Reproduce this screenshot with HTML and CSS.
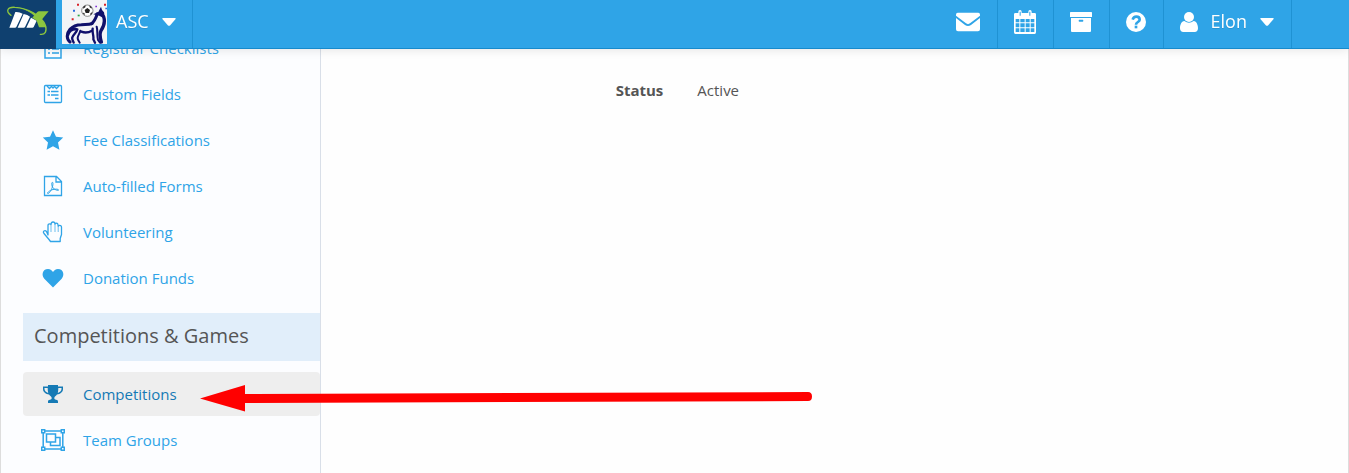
FILE: index.html
```html
<!DOCTYPE html>
<html lang="en">
<head>
  <meta charset="UTF-8">
  <meta name="viewport" content="width=device-width, initial-scale=1.0">
  <title>ASC - Club Settings</title>
  <link rel="stylesheet" href="styles.css">
</head>
<body>

  <header class="navbar">
    <a class="logo" href="#" aria-label="Home">
      <svg width="56" height="48" viewBox="0 0 168 144">
        <path fill="#fff" d="M46 36q12-1 22 5L49 81q-1 2-4 2H28zM71 42q12 2 19 8L75 81q-1 2-4 2H53zM93 53l17 9-9 19q-1 2-4 2H79z"/>
        <path fill="#8cc63f" d="M103 46l9-10q2-2 5-2h29l-21 25 15 23h-23L110 62l-13-9z"/>
        <path fill="none" stroke="#8cc63f" stroke-width="4" stroke-linecap="round" d="M33 46C16 34 22 20 45 22c36 2 80 24 91 54 6 18-1 29-15 27"/>
        <path fill="#8cc63f" d="M60 24c24 3 56 20 70 41l-8 2C108 48 86 32 60 24z"/>
      </svg>
    </a>
    <button class="nav-item club" type="button">
      <svg class="club-logo" width="45" height="44" viewBox="0 0 135 132">
        <path fill="#f3f4f6" d="M0 0h135v132H0z"/>
        <g fill="none" stroke="#10106b" stroke-linecap="round" stroke-linejoin="round">
          <path stroke-width="9" d="M24 126c-10-8-12-24 0-38 8-9 22-14 34-14 12-1 22 1 32-3"/>
          <path stroke-width="9" d="M88 71c10-6 14-18 18-30"/>
          <path stroke-width="9" d="M17 106c3-12 12-19 24-19"/>
          <path stroke-width="7" d="M46 88c-2 10-12 15-15 24-2 6 2 10 4 16"/>
          <path stroke-width="6" d="M55 92c-1 8-8 14-8 22 0 6 4 10 6 14"/>
          <path stroke-width="7" d="M58 95c10 4 20 4 32-3"/>
          <path stroke-width="7" d="M92 86c-2 12 4 22 2 32l5 10"/>
          <path stroke-width="6" d="M104 80c4 12 0 26 4 40l6 8"/>
          <path stroke-width="10" d="M125 50c6 18 0 30-8 42-5 9-3 20 1 34"/>
        </g>
        <path fill="#10106b" d="M94 43l15-7 8-16 3 10 6 7 3 17-9-2-8-5z"/>
        <circle cx="76" cy="32" r="17" fill="#fff" stroke="#555" stroke-width="2"/>
        <path fill="#222" d="M76 24l8 6-3 9H71l-3-9zM64 20l7-4-1 6-7 4zM82 16l7 5v5l-6-4zM62 38l5 1 2 6-4-2zM84 43l3-5 5-1-5 8z"/>
        <path fill="#d8232a" d="M45 11h6v6h-6zM29 55h6v6h-6zM126 11h6v6h-6z"/>
        <path fill="#2b6de0" d="M33 29h6v6h-6zM130 23h5v5h-5z"/>
        <path fill="#28a745" d="M47 44h6v5h-6z"/>
        <path fill="#7b2bd6" d="M100 17h5v5h-5z"/>
      </svg>
      <span>ASC</span>
      <svg class="caret" width="14" height="8" viewBox="0 0 14 8"><path fill="currentColor" d="M1 0h12q1 0 .6 1L8 7.4q-1 .9-2 0L.4 1Q0 0 1 0z"/></svg>
    </button>

    <nav class="nav-right">
      <a class="nav-item" href="#" aria-label="Messages">
        <svg width="24" height="20" viewBox="0 0 72 60">
          <path fill="currentColor" d="M5 2h62q5 0 5 6v3L42 34q-6 5-12 0L0 11V8q0-6 5-6zM0 18l27 21q9 6 18 0l27-21v34q0 6-6 6H6q-6 0-6-6z"/>
        </svg>
      </a>
      <a class="nav-item" href="#" aria-label="Calendar">
        <svg width="22" height="24" viewBox="0 0 66 72">
          <path fill="currentColor" fill-rule="evenodd" d="M4 9h9V5q0-5 5-5t5 5v4h20V5q0-5 5-5t5 5v4h9q4 0 4 4v54q0 5-4 5H4q-4 0-4-5V13q0-4 4-4zM5 27v10h11V27zm14 0v10h13V27zm16 0v10h12V27zm15 0v10h11V27zM5 40v12h11V40zm14 0v12h13V40zm16 0v12h12V40zm15 0v12h11V40zM5 55v11h11V55zm14 0v11h13V55zm16 0v11h12V55zm15 0v11h11V55zM17 5v12h3V5zm29 0v12h3V5z"/>
        </svg>
      </a>
      <a class="nav-item" href="#" aria-label="Archive">
        <svg width="22" height="20" viewBox="0 0 66 60">
          <path fill="currentColor" fill-rule="evenodd" d="M2 0h62q2 0 2 2v13H0V2q0-2 2-2zM3 18h60v39q0 3-3 3H6q-3 0-3-3zm25 5q-2 0-2 3t2 3h10q2 0 2-3t-2-3z"/>
        </svg>
      </a>
      <a class="nav-item" href="#" aria-label="Help">
        <svg width="20" height="20" viewBox="0 0 60 60">
          <circle cx="30" cy="30" r="30" fill="currentColor"/>
          <path fill="none" stroke="#2fa4e7" stroke-width="8" d="M20 23c2-7 7-9 11-9 6 0 10 4 10 9 0 7-11 7-11 15"/>
          <path fill="#2fa4e7" d="M26 41h8v8h-8z"/>
        </svg>
      </a>
      <button class="nav-item user" type="button">
        <svg width="18" height="20" viewBox="0 0 54 60">
          <circle cx="27" cy="15" r="15" fill="currentColor"/>
          <path fill="currentColor" d="M13 27q14 11 28 0c9 1 13 12 13 22 0 7-4 11-10 11H10C4 60 0 56 0 49c0-10 4-21 13-22z"/>
        </svg>
        <span>Elon</span>
        <svg class="caret" width="14" height="8" viewBox="0 0 14 8"><path fill="currentColor" d="M1 0h12q1 0 .6 1L8 7.4q-1 .9-2 0L.4 1Q0 0 1 0z"/></svg>
      </button>
    </nav>
  </header>

  <div class="page">
    <aside class="sidebar">
      <ul class="menu">
        <li><a href="#">
          <svg viewBox="0 0 24 24" fill="none" stroke="currentColor" stroke-width="1.5"><path d="M4 4h16v18H4zM7 9h2M7 13h2M7 17h2M11 9h7M11 13h7M11 17h7"/></svg>
          Registrar Checklists</a></li>
        <li><a href="#">
          <svg viewBox="0 0 24 24" fill="none" stroke="currentColor" stroke-width="1.3"><rect x="3.5" y="3.5" width="17" height="17" rx="1"/><path d="M6 4l2.500 2.500L10.500 4.500 12 6l1.500-1.500L15.500 6.500 18 4M6.500 9.500H9M10 9.500h7.500M6.500 13H9M10 13h7.500M14 16.500h3.500"/></svg>
          Custom Fields</a></li>
        <li><a href="#">
          <svg viewBox="0 0 24 24" fill="currentColor"><path d="M12 2.300l3 6.400 7.200.9-5.200 4.900 1.400 7.200-6.400-3.500-6.400 3.500L7 14.500 1.800 9.600 9 8.700z"/></svg>
          Fee Classifications</a></li>
        <li><a href="#">
          <svg viewBox="0 0 24 24" fill="none" stroke="currentColor" stroke-width="1.300"><path d="M3.500 2.500h12l5 5v14h-17zM15 2.500V8h5.500"/><path stroke-width="1" d="M11 8.500c1.500-1 .9 3 .4 4.500-1 3-3 6.500-4.400 6.500-2 0 2-3.500 5-4 3-.6 6-.4 5.500.7-.7 1-5-1.200-6.100-3.200-.6-1.400-1-3.800-.4-4.500z"/></svg>
          Auto-filled Forms</a></li>
        <li><a href="#">
          <svg viewBox="0 0 24 24" fill="none" stroke="currentColor" stroke-width="1.300" stroke-linejoin="round"><path d="M7 15V5.500q0-1.700 1.600-1.700 1 0 1.400.7 0-2.500 2-2.500t2 2q.5-.8 1.500-.8Q17 3.200 17.200 6q.5-.7 1.500-.7 1.800 0 1.800 2v7.200l-1.300 4v3H9.500L8 19.500l-5-6q-1.200-1.700 0-2.500 1.300-.8 2.500.5z"/><path stroke-width=".7" d="M10 4.500V12M14 4v8M17.200 6v6"/></svg>
          Volunteering</a></li>
        <li><a href="#">
          <svg viewBox="0 0 24 24" fill="currentColor"><path d="M12 21.500L3.300 12.700C.3 9.500 1.200 3 7 3c2.500 0 4 1.600 5 2.900C13 4.600 14.500 3 17 3c5.800 0 6.700 6.500 3.700 9.700z"/></svg>
          Donation Funds</a></li>
      </ul>

      <h2>Competitions &amp; Games</h2>

      <ul class="menu">
        <li><a class="active" href="#">
          <svg viewBox="0 0 24 24" fill="currentColor"><path fill-rule="evenodd" d="M7 3h10v1.500h5V7c0 3.300-3 5-6 5.500-1 1.300-2.700 2-2.700 3.500 0 1.300.7 1.700 1.700 1.700 1.500 0 2 .8 2 2V21H7v-1.300c0-1.200.5-2 2-2 1 0 1.700-.4 1.700-1.700 0-1.500-1.700-2.200-2.700-3.500C5 12 2 10.300 2 7V4.500h5zM3.500 6v1c0 2 1.800 3.300 3.700 3.900C6.800 9.200 6.700 7.600 6.700 6zm17 0h-3.200c0 1.600-.1 3.200-.5 4.900C18.700 10.300 20.500 9 20.500 7z"/></svg>
          Competitions</a></li>
        <li><a href="#">
          <svg viewBox="0 0 24 24" fill="none" stroke="currentColor" stroke-width="1.500"><path d="M3.700 3h16.600M3.700 21h16.600M2.200 4.500v15M21.800 4.500v15"/><path d="M.700 1.700h3v3h-3zM20.300 1.700h3v3h-3zM.700 19.300h3v3h-3zM20.300 19.300h3v3h-3z"/><path d="M5.500 6h9v8h-9zM14.500 9.500h4.500v8H9.500V14"/></svg>
          Team Groups</a></li>
      </ul>
    </aside>

    <main class="content">
      <dl class="details">
        <dt>Status</dt>
        <dd>Active</dd>
      </dl>
    </main>
  </div>

  <svg class="arrow" width="614" height="30" viewBox="0 0 614 30" aria-hidden="true">
    <path fill="#f00" d="M0 15.500L45 2v9L608 9q4 0 4 4.500T608 18L45 20v8.500z"/>
  </svg>

</body>
</html>
```
FILE: styles.css
```css
* {
  box-sizing: border-box;
}

body {
  margin: 0;
  height: 100vh;
  overflow: hidden;
  font-family: 'Open Sans', sans-serif;
  font-size: 15px;
  line-height: 20px;
  color: #555;
  background-color: #fefefe;
}

/* top bar */
.navbar {
  position: fixed;
  top: 0;
  left: 0;
  right: 0;
  z-index: 10;
  display: flex;
  height: 49px;
  background-color: #2fa4e7;
  border-bottom: 1px solid #178acc;
  box-shadow: 0 1px 10px rgba(0, 0, 0, 0.1);
}

.logo {
  height: 49px;
  background-color: #0f406f;
}

.nav-item {
  display: flex;
  align-items: center;
  padding: 0 16px;
  border: 0;
  border-right: 1px solid #1f92d3;
  background: none;
  color: #fff;
  font-family: inherit;
  font-size: 18px;
  line-height: 24px;
  text-shadow: 0 1px 0 rgba(0, 0, 0, 0.1);
  cursor: pointer;
}

.nav-item svg {
  display: block;
}

.nav-item span {
  padding-bottom: 6px;
}

.nav-item .caret {
  margin-left: 13px;
  margin-bottom: 4px;
}

.nav-item > svg:first-child {
  margin-bottom: 4px;
}

.club {
  padding: 0 16px 0 6px;
}

.club span {
  margin-left: 9px;
}

.nav-right {
  display: flex;
  margin-left: auto;
  margin-right: 57px;
}

.nav-right .nav-item {
  padding-right: 17px;
}

.user span {
  margin-left: 13px;
}

/* page */
.page {
  display: flex;
  min-height: 100vh;
  border-left: 1px solid #ddd;
  border-right: 1px solid #ddd;
}

.sidebar {
  flex: 0 0 320px;
  padding: 26px 0 0 22px;
  background-color: #fcfdff;
  border-right: 1px solid #d9dfe8;
}

.menu {
  margin: 0;
  padding: 0;
  list-style: none;
}

.menu li {
  margin-bottom: 2px;
}

.menu a {
  display: flex;
  align-items: center;
  gap: 18px;
  height: 44px;
  padding-left: 18px;
  border-radius: 4px;
  color: #2fa4e7;
  text-decoration: none;
}

.menu svg {
  width: 24px;
  height: 24px;
}

.menu a.active {
  background-color: #eee;
  color: #157ab5;
}

.sidebar h2 {
  margin: 13px 0 11px;
  padding: 9px 11px 11px;
  background-color: #e1eefa;
  font-size: 20px;
  font-weight: normal;
  line-height: 28px;
}

.content {
  flex: 1;
  padding-top: 80px;
}

.details {
  display: grid;
  grid-template-columns: 1fr 2fr;
  margin: 0;
}

.details dt {
  font-weight: bold;
  text-align: right;
}

.details dd {
  margin: 0;
  padding-left: 34px;
}

/* pointer drawn over the page */
.arrow {
  position: absolute;
  top: 383px;
  left: 200px;
}
```
